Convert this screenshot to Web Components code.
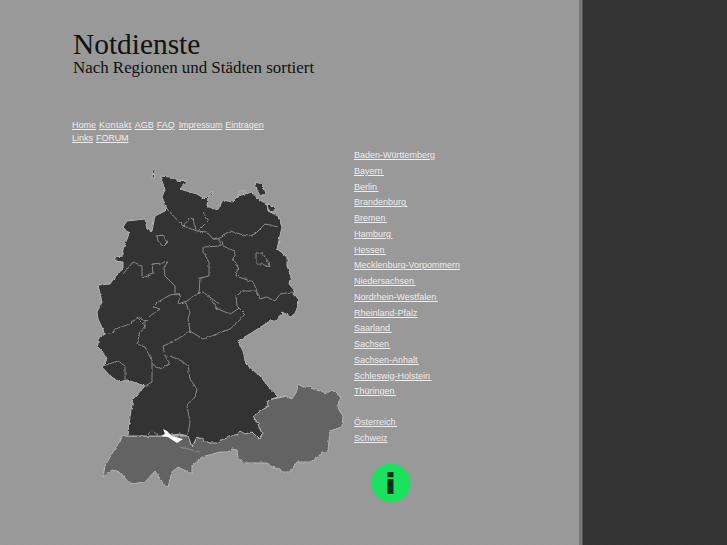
<!DOCTYPE html>
<html lang="de"><head><meta charset="utf-8"><title>Notdienste</title>
<style>html,body{margin:0;height:100%;background:#333}</style></head><body>
<nd-page>
  <nd-title slot="title"><span>Notdienste</span><span slot="sub">Nach Regionen und Städten sortiert</span></nd-title>
  <nd-nav slot="nav"><a href="#">Home</a><a href="#" style="letter-spacing:.3px">Kontakt</a><a href="#">AGB</a><a href="#">FAQ</a><a href="#" style="letter-spacing:-.1px;margin-left:1px">Impressum</a><a href="#">Eintragen</a><a href="#">Links</a><a href="#" style="letter-spacing:-.1px">FORUM</a></nd-nav>
  <nd-map slot="map"></nd-map>
  <nd-regions slot="list">
    <a href="#">Baden-Württemberg</a><a href="#">Bayern&nbsp;</a><a href="#">Berlin&nbsp;</a><a href="#">Brandenburg&nbsp;</a><a href="#">Bremen&nbsp;</a><a href="#">Hamburg&nbsp;</a><a href="#">Hessen&nbsp;</a><a href="#">Mecklenburg-Vorpommern</a><a href="#">Niedersachsen&nbsp;</a><a href="#">Nordrhein-Westfalen&nbsp;</a><a href="#">Rheinland-Pfalz</a><a href="#">Saarland&nbsp;</a><a href="#">Sachsen&nbsp;</a><a href="#">Sachsen-Anhalt&nbsp;</a><a href="#">Schleswig-Holstein&nbsp;</a><a href="#">Thüringen&nbsp;</a><a href="#" class="gap">Österreich&nbsp;</a><a href="#">Schweiz</a>
    <nd-info slot="info"></nd-info>
  </nd-regions>
</nd-page>
<script>
const linkCss=`::slotted(a){color:#eee;font:9px/13px "Liberation Sans",Arial,sans-serif;text-decoration:underline;word-spacing:-1px}`;
const dither=(a,b)=>`conic-gradient(${a} 25%,${b} 0 50%,${a} 0 75%,${b} 0) 0 0/2px 2px`;
customElements.define('nd-page',class extends HTMLElement{constructor(){super();this.attachShadow({mode:'open'}).innerHTML=`<style>
:host{display:flex;min-height:545px;background:${dither('#313131','#353535')};overflow:hidden}
main{width:579px;height:545px;flex:none;background:${dither('#979797','#9b9b9b')};padding:30px 0 0 73px;box-sizing:border-box;overflow:hidden}
.edge{width:4px;flex:none;background:linear-gradient(90deg,#777 0 3px,#555 3px)}
.nav{margin:38px 0 0 -1px;width:205px}
.row{display:flex;margin:4px 0 0 -1px}
.map{width:282px;flex:none}
</style><main><slot name="title"></slot><div class="nav"><slot name="nav"></slot></div><div class="row"><div class="map"><slot name="map"></slot></div><div><slot name="list"></slot></div></div></main><div class="edge"></div>`}});
customElements.define('nd-title',class extends HTMLElement{constructor(){super();this.attachShadow({mode:'open'}).innerHTML=`<style>
:host{display:block;color:#111;font-family:"Liberation Serif",serif;height:51px}
::slotted(span){display:block;font-size:29.4px;line-height:29px}
::slotted(span[slot=sub]){font-size:16.9px;line-height:17px}
</style><slot></slot><slot name="sub"></slot>`}});
customElements.define('nd-nav',class extends HTMLElement{constructor(){super();this.attachShadow({mode:'open'}).innerHTML=`<style>
:host{display:flex;flex-wrap:wrap;column-gap:3px}
${linkCss}
</style><slot></slot>`}});
customElements.define('nd-regions',class extends HTMLElement{constructor(){super();this.attachShadow({mode:'open'}).innerHTML=`<style>
:host{display:flex;flex-direction:column;align-items:flex-start;row-gap:2.75px}
${linkCss}
::slotted(a.gap){margin-top:15px}
.info{margin:15px 0 0 17px}
</style><slot></slot><div class="info"><slot name="info"></slot></div>`}});
customElements.define('nd-info',class extends HTMLElement{constructor(){super();this.attachShadow({mode:'open'}).innerHTML=`<style>:host{display:block;width:40px;height:40px}svg{display:block}</style>
<svg width="40" height="40" viewBox="0 0 40 40" role="img" aria-label="Info"><circle cx="20" cy="20" r="19.6" fill="#1be25e"/><rect x="16.5" y="9" width="6" height="5.2" fill="#06301c"/><rect x="16.5" y="16" width="6" height="15" fill="#06301c"/></svg>`}});
customElements.define('nd-map',class extends HTMLElement{constructor(){super();
const de="160,177 170,178 176,181 187,182 180,190 190,193 197,195 205,200 208,197 207,208 210,208 217,212 223,201 232,203 238,197 252,193 258,200 267,205 268,212 278,217 282,228 277,250 287,257 287,267 291,277 289,285 295,292 293,295 299,302 297,310 293,318 288,316 282,313 278,320 270,322 253,333 238,342 243,352 246,365 260,377 268,387 278,398 268,401 267,408 253,417 258,425 262,435 259,440 252,433 245,435 240,432 238,435 223,440 217,444 210,444 197,438 192,448 188,437 180,435 162,437 147,437 128,437 130,417 133,400 145,387 127,381 120,383 110,377 102,368 107,358 98,348 98,340 105,335 98,320 97,313 102,303 98,286 110,285 117,275 123,270 123,263 115,262 115,258 123,257 123,250 129,235 123,228 127,222 145,220 147,230 152,232 155,217 165,212 167,210 162,198 165,190";
const lines=["167,210 183,227 197,232 207,233 213,240 220,240","183,227 190,219 193,220 196,231","203,213 208,222 198,232",
"123,275 133,263 142,267 142,277 145,278 153,275 152,265 162,264 168,263 164,268 165,277 175,287 175,295 180,295",
"180,295 170,296 158,303 153,308 160,310 150,317 145,322 145,330","145,322 138,318 127,326 115,330 113,333 105,335",
"180,295 178,305 187,302 197,295 203,293 215,302 220,305","220,247 203,248 203,253 209,263 209,277 200,279 199,295",
"213,240 220,238 230,232 247,237 255,235 265,225 278,228","222,242 223,247 235,252 233,260 238,267 236,277 253,283 257,292",
"257,292 260,300 267,298 275,302 280,295 293,293","257,292 243,292 236,297 237,307 245,315 238,323 230,330 217,335 203,340 190,332 173,343 163,347 165,357 170,365 160,370 152,365",
"210,300 218,310 230,315 238,310","190,332 188,320 190,313 185,303","170,357 182,362 188,367 190,380 197,390 195,398 187,407 190,423 188,435",
"138,320 145,327 140,333 137,345 145,348 152,362 152,383 145,387","103,367 118,362 125,367 125,382","220,247 220,240"];
this.attachShadow({mode:'open'}).innerHTML=`<style>:host{display:block;width:282px;height:400px}svg{display:block}</style>
<svg width="282" height="400" viewBox="72 150 282 400" role="img" aria-label="Karte von Deutschland, Österreich und der Schweiz">
<defs><filter id="w" x="-5%" y="-5%" width="110%" height="110%" color-interpolation-filters="sRGB"><feTurbulence type="fractalNoise" baseFrequency="0.22" numOctaves="2" seed="4" result="n"/><feDisplacementMap in="SourceGraphic" in2="n" scale="3" xChannelSelector="R" yChannelSelector="G"/></filter></defs>
<g filter="url(#w)">
<g stroke="#b5b5b5" stroke-width="1" stroke-linejoin="round">
<polygon fill="#636363" points="123,437 113,453 105,467 103,478 112,471 120,473 130,485 145,483 155,472 165,487 168,488 172,473 178,468 192,475 192,467 200,460 202,458 220,453 228,453 232,450 237,451 238,458 243,464 267,464 272,468 280,470 282,473 290,473 297,463 310,463 318,458 322,453 328,452 330,432 342,428 343,417 337,408 341,398 332,391 327,394 313,390 310,387 303,388 298,385 297,392 292,400 287,397 278,399 268,401 267,408 253,417 258,425 262,435 259,440 252,433 240,432 223,440 210,444 197,438 192,448 188,437 162,437 128,437"/>
<polygon fill="#333" points="${de}"/>
<polygon fill="#333" points="153,170 155,171 154,180 152,179"/>
<polygon fill="#333" points="209,195 213,192 212,197"/>
<polygon fill="#333" points="255,183 259,184 263,188 265,195 261,197 257,190"/>
<polygon fill="#333" points="267,204 272,207 276,211 272,213 268,210"/>
<polyline fill="none" points="238,196 240,192 247,192"/>
</g>
<g fill="none" stroke="#8a8a8a" stroke-width="1">
${lines.map(p=>`<polyline points="${p}"/>`).join('')}
<polygon points="157,237 162,236 168,243 164,247 158,242"/>
<polygon points="256,254 262,254 268,262 269,268 262,265 256,265"/>
<polyline points="148,435 152,432 158,436 154,438"/>
<polyline points="180,448 200,453"/>
</g></g>
<polygon fill="#fff" points="163,430 167,432 172,437 183,440 177,444 168,438 161,437 165,435"/>
</svg>`}});
</script></body></html>
